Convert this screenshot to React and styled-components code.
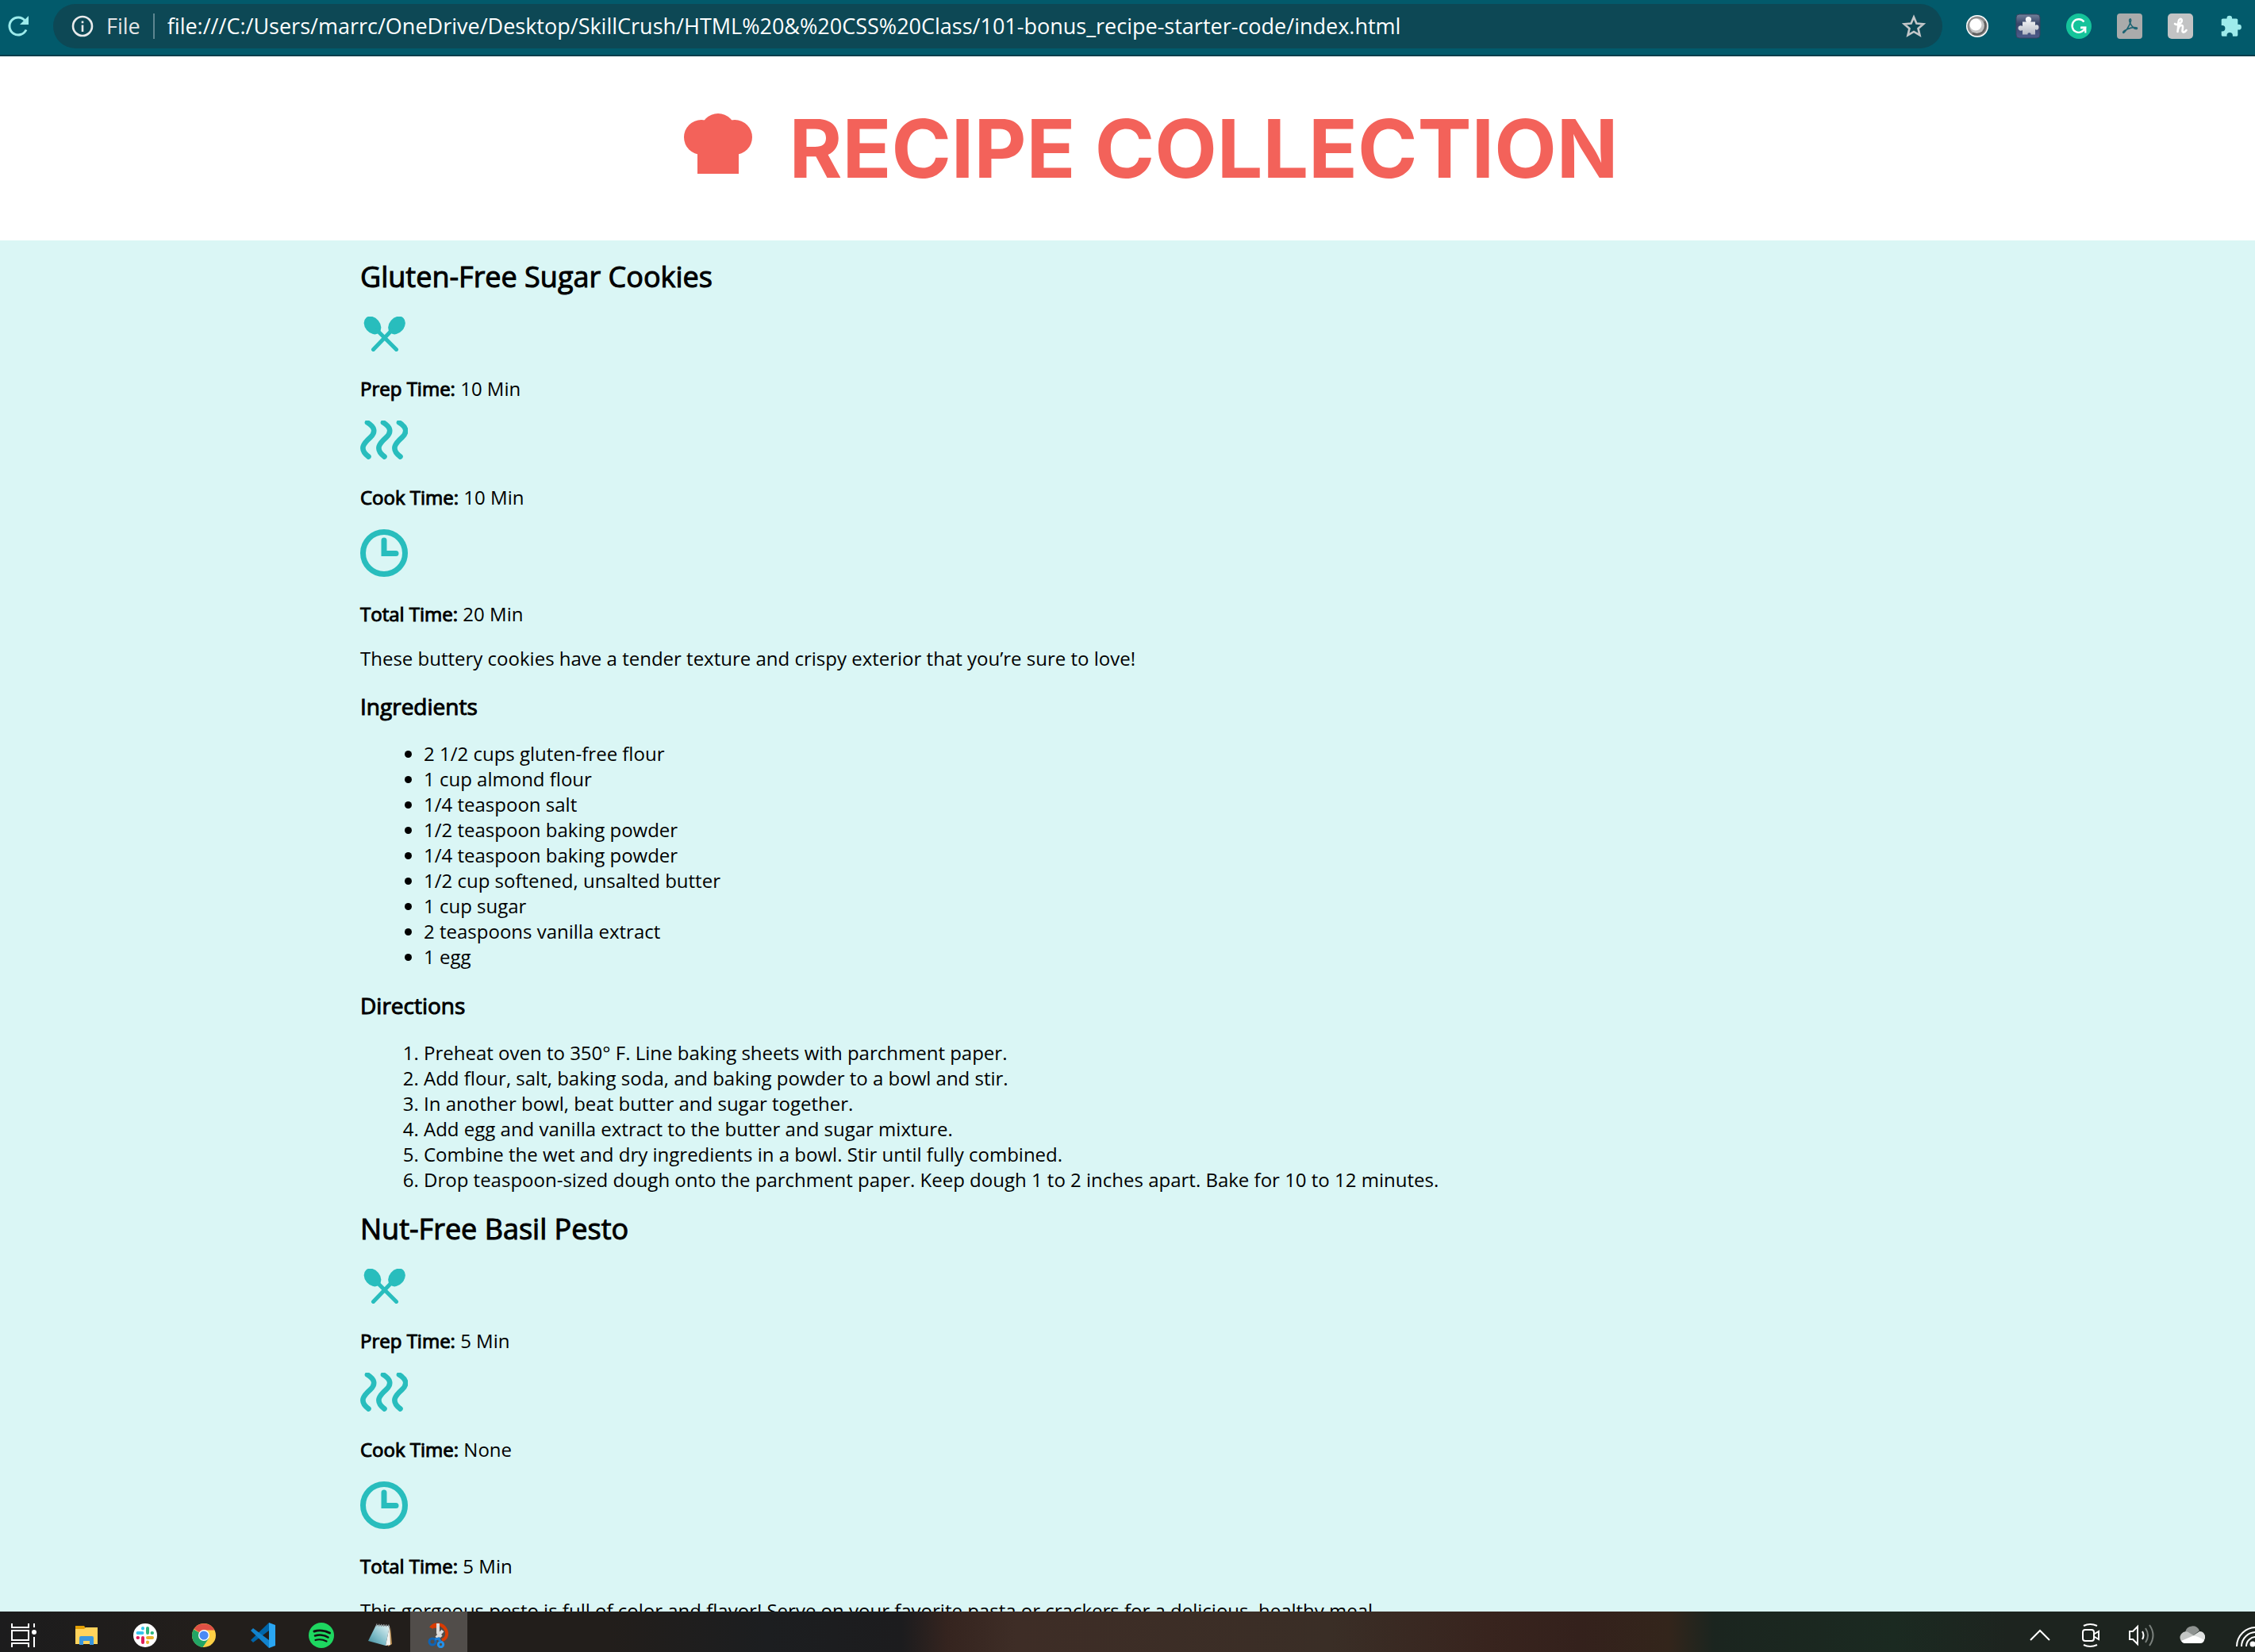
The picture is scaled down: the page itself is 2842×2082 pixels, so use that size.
import React from "react";
import styled, { createGlobalStyle } from "styled-components";

const GlobalStyle = createGlobalStyle`
  * { box-sizing: border-box; }
  body { margin: 0; font-family: "Open Sans", "Noto Sans", sans-serif; }
`;

const Screen = styled.div`
  display: grid;
  grid-template-rows: auto minmax(0, 1fr) auto;
  height: 100vh;
  overflow: hidden;
`;

/* Browser toolbar */
const Toolbar = styled.header`
  display: flex;
  align-items: center;
  height: 71px;
  padding: 0 14px 4px 7px;
  background: #025a6b;
  border-bottom: 2px solid #013e4b;
`;
const IconButton = styled.button`
  display: grid;
  place-items: center;
  width: 32px;
  height: 32px;
  padding: 0;
  border: 0;
  background: none;
`;
const AddressBar = styled.div`
  flex: 1;
  display: flex;
  align-items: center;
  height: 56px;
  margin: 0 28px;
  padding: 0 20px 0 23px;
  border-radius: 28px;
  background: #0d4855;
`;
const Scheme = styled.label`
  padding: 0 16px;
  border-right: 2px solid #5d8690;
  color: #e3e5e6;
  font-size: 27px;
  line-height: 32px;
`;
const Url = styled.input`
  flex: 1;
  min-width: 0;
  padding: 0 16px;
  border: 0;
  background: none;
  color: #fff;
  font: 27px/36px "Open Sans", "Noto Sans", sans-serif;
`;
const Extensions = styled.div`
  display: flex;
  gap: 32px;
`;

/* Recipe page */
const Page = styled.main`
  overflow: hidden;
  background: #daf6f5;
  color: #000;
  font-size: 24px;
  line-height: 32px;
`;
const Banner = styled.div`
  display: flex;
  align-items: center;
  justify-content: center;
  gap: 46px;
  height: 232px;
  padding-left: 60px;
  background: #fff;
`;
const Title = styled.h1`
  margin: 0;
  color: #f3625a;
  font: 700 102px/120px Inter, "Open Sans", sans-serif;
`;
const Recipe = styled.article`
  max-width: 1934px;
  margin: 0 auto;
`;
const Name = styled.h2`
  margin: 22px 0 26px;
  font-size: 36px;
  font-weight: 400;
  line-height: 48px;
  -webkit-text-stroke: 1px #000;
`;
const Picture = styled.div`
  padding-bottom: 7px;
  svg { display: block; }
`;
const Line = styled.p`
  margin: 24px 0;
`;
const Strong = styled.strong`
  font-weight: 400;
  -webkit-text-stroke: 1px #000;
`;
const Subhead = styled.h3`
  margin: 26px 0;
  font-size: 28px;
  font-weight: 400;
  line-height: 36px;
  -webkit-text-stroke: 1px #000;
`;
const Ingredients = styled.ul`
  margin: 0;
  padding: 0 0 1px 80px;
`;
const Directions = styled.ol`
  margin: 0;
  padding: 0 0 0 80px;
`;

/* Desktop taskbar */
const Taskbar = styled.footer`
  display: flex;
  justify-content: space-between;
  height: 51px;
  overflow: hidden;
  background: linear-gradient(90deg, #1c1c1d 0%, #221e1b 9%, #221e1b 27%, #1c1e20 34%, #1c1c1e 40%, #35241f 42%, #3e2d26 45%, #3a2e26 59%, #38241e 66%, #34211c 70%, #33251b 74%, #1b251f 76%, #1b2a21 84%, #1d241f 89%);
`;
const Apps = styled.nav`
  display: flex;
  gap: 2px;
`;
const AppButton = styled.button`
  display: grid;
  place-items: center;
  width: ${(p) => (p.$narrow ? 71 : 72)}px;
  height: 51px;
  padding: 0 ${(p) => (p.$narrow ? 11 : 0)}px 0 0;
  border: 0;
  background: ${(p) => (p.$active ? "#514d4a" : "none")};
  svg { margin-top: 9px; }
`;
const Tray = styled.div`
  display: flex;
  align-items: center;
  gap: 32px;
  margin-right: -1px;
  padding-top: 9px;
`;

const Reload = () => (
  <svg width="28" height="28" viewBox="0 0 28 28" fill="none">
    <path d="M24 18.5A11 11 0 1 1 22.5 7" stroke="#9debeb" strokeWidth="3" />
    <path d="M27 1v11H16z" fill="#9debeb" />
  </svg>
);
const Info = () => (
  <svg width="28" height="28" viewBox="0 0 28 28" fill="none" stroke="#e8eaeb">
    <circle cx="14" cy="14" r="12" strokeWidth="2.6" />
    <path d="M14 12.5V21M14 7.5v2.8" strokeWidth="2.6" />
  </svg>
);
const Star = () => (
  <svg width="30" height="30" viewBox="0 0 30 30" fill="none">
    <path d="M15 3.5l3.4 8 8.7.7-6.6 5.7 2 8.5-7.5-4.5-7.5 4.5 2-8.5-6.6-5.7 8.7-.7z" stroke="#c4c7c9" strokeWidth="2.6" />
  </svg>
);
const Orb = () => (
  <svg width="30" height="30" viewBox="0 0 30 30">
    <circle cx="15" cy="15" r="14" fill="#fff" />
    <circle cx="15" cy="15" r="12.5" fill="#8d8d8d" />
    <path d="M25 8a12.5 12.5 0 0 1-17 17z" fill="#5f5f5f" />
    <circle cx="14.5" cy="14.5" r="9.5" fill="#c4c4c4" />
    <circle cx="13" cy="13" r="7.5" fill="#fff" />
  </svg>
);
const DarkPuzzle = () => (
  <svg width="32" height="32" viewBox="0 0 32 32">
    <defs>
      <linearGradient id="dp" x1="0" y1="0" x2="0" y2="1"><stop offset="0" stopColor="#74829b" /><stop offset=".4" stopColor="#3a4669" /><stop offset="1" stopColor="#4e5c8c" /></linearGradient>
      <linearGradient id="dq" x1="0" y1="0" x2="0" y2="1"><stop offset="0" stopColor="#fff" /><stop offset="1" stopColor="#b6bac6" /></linearGradient>
    </defs>
    <rect x="1" y="1" width="30" height="30" rx="4" fill="url(#dp)" stroke="#37415e" />
    <path d="M14 10.500c-2-2-1.500-6.500 2.500-6.500s4.500 4.500 2.500 6.500h6V15c2-1.500 4.500-.5 4.500 2.500S27 21.500 25 20v6.500h-5.500c.8-3-4.800-3-4 0H9V21c-2 1.500-5.500.5-5.500-2.500S7 14.500 9 16v-5.500z" fill="url(#dq)" />
  </svg>
);
const Grammarly = () => (
  <svg width="32" height="32" viewBox="0 0 32 32" fill="none">
    <circle cx="16" cy="16" r="16" fill="#15c39a" />
    <path d="M22.500 10.500A8.300 8.300 0 1 0 23.800 18H18" stroke="#fff" strokeWidth="2.400" />
    <path d="M24.300 24.500V17.500H18.500" stroke="#fff" strokeWidth="2.200" />
  </svg>
);
const Acrobat = () => (
  <svg width="32" height="32" viewBox="0 0 32 32" fill="none">
    <rect width="32" height="32" rx="4" fill="#aaabab" />
    <path d="M16.500 7c-2.500 1 1 8.500 5 11.500 3 2 5 .5 3.500-.5-3-1.500-11 .5-16 4-2.500 2-1 3.500 1 1C13.500 19.500 18.500 10 17.500 7.500c-.2-.6-.6-.7-1-.5z" stroke="#1c6473" strokeWidth="1.600" />
  </svg>
);
const Honey = () => (
  <svg width="32" height="32" viewBox="0 0 32 32" fill="none">
    <rect width="32" height="32" rx="5" fill="#c2c3c4" />
    <path d="M9 13c3 2.500 9-1 8.800-4.500-.3-3-4-1.500-4.300 2-.3 4-.3 8-1 12.500M13 20c1-3.500 3-5.500 5-5 2.500.8 0 5 .5 7.500.4 1.800 3 1.500 5-1.500" stroke="#fff" strokeWidth="2.600" strokeLinecap="round" />
  </svg>
);
const Puzzle = () => (
  <svg width="32" height="32" viewBox="0 0 32 32"><path transform="translate(1.500 1)" d="M9 5.500V5a3.300 3.300 0 0 1 6.600 0v.5H21c1 0 1.800.8 1.800 1.800v5.500H24a3.400 3.400 0 0 1 0 6.800h-1.200V26c0 1-.8 1.800-1.800 1.800h-4.600v-1a3.700 3.700 0 0 0-7.400 0v1H4c-1 0-1.800-.8-1.800-1.800v-4.600h1a3.700 3.700 0 0 0 0-7.400h-1V7.300c0-1 .8-1.800 1.800-1.800z" fill="#9debeb" /></svg>
);

const ChefHat = () => (
  <svg width="86" height="88" viewBox="0 0 86 88" fill="#f3625a">
    <circle cx="22" cy="30" r="22" />
    <circle cx="64" cy="30" r="22" />
    <circle cx="43" cy="22" r="22" />
    <path d="M17 20h52v56H17z" />
  </svg>
);
const Spoons = () => (
  <svg width="60" height="44" viewBox="0 0 60 44" fill="#28bdbd">
    <ellipse cx="15.500" cy="11" rx="9.500" ry="12.500" transform="rotate(-40 15.500 11)" />
    <ellipse cx="46" cy="11" rx="9.500" ry="12.500" transform="rotate(40 46 11)" />
    <path d="M21 17l24.500 24.500M40 17L16.500 41.500" stroke="#28bdbd" strokeWidth="5" strokeLinecap="round" />
  </svg>
);
const wave = "M9 2.500c9 5.500 11 11.500 4 18.500-9 8-15 15 -2.500 24.500";
const Heat = () => (
  <svg width="60" height="50" viewBox="0 0 60 50" fill="none" stroke="#28bdbd" strokeWidth="6.600" strokeLinecap="round">
    <path d={wave} /><path d={wave} transform="translate(20)" /><path d={wave} transform="translate(40)" />
  </svg>
);
const Clock = () => (
  <svg width="60" height="60" viewBox="0 0 60 60" fill="none" stroke="#28bdbd" strokeWidth="7">
    <circle cx="30" cy="30" r="26.500" />
    <path d="M30 14v16.500h15" strokeLinecap="round" />
  </svg>
);

const TaskView = () => (
  <svg width="32" height="32" viewBox="0 0 32 32" fill="none" stroke="#fff" strokeWidth="2">
    <path d="M1 1v5h21V1M1 31v-5h21v5M1 10h21v12H1zM29 1v5M29 18v13" />
    <circle cx="29" cy="12" r="3" fill="#fff" stroke="none" />
  </svg>
);
const Folder = () => (
  <svg width="32" height="32" viewBox="0 0 32 32">
    <path d="M2 4h11l2 3v2H2z" fill="#e29f05" /><path d="M2 8h11l2-2h15v21H2z" fill="#ffd35c" />
    <path d="M7 28V19q0-2 2-2h14q2 0 2 2v9h-5v-5h-8v5z" fill="#3a96dd" />
  </svg>
);
const Slack = () => (
  <svg width="32" height="32" viewBox="0 0 32 32" fill="none" strokeWidth="4" strokeLinecap="round">
    <circle cx="16" cy="16" r="15" fill="#fff" />
    <path d="M6.500 13h6M13 7v.5" stroke="#36c5f0" /><path d="M19 7v6M25 13h-.5" stroke="#2eb67d" />
    <path d="M19 19h6M19 25v-.5" stroke="#ecb22e" /><path d="M13 19v6M6.500 19h.5" stroke="#e01e5a" />
  </svg>
);
const Chrome = () => (
  <svg width="32" height="32" viewBox="0 0 32 32">
    <circle cx="16" cy="16" r="15" fill="#fdd045" />
    <path d="M16 16L3 8.500A15 15 0 0 0 14.500 31L22 20z" fill="#22a565" />
    <path d="M16 16L3.500 8A15 15 0 0 1 29.500 9.500H16z" fill="#df5045" />
    <circle cx="16" cy="16" r="7" fill="#fff" /><circle cx="16" cy="16" r="5.600" fill="#4a8af4" />
  </svg>
);
const Code = () => (
  <svg width="32" height="32" viewBox="0 0 32 32">
    <path d="M24 0v10L4 25l-3-3z" fill="#0065a9" /><path d="M24 32V22L4 7l-3 3z" fill="#1283cd" />
    <path d="M24 0l8 3v26l-8 3z" fill="#2aa6f2" />
  </svg>
);
const Spotify = () => (
  <svg width="32" height="32" viewBox="0 0 32 32" fill="none" stroke="#111" strokeLinecap="round">
    <circle cx="16" cy="16" r="16" fill="#1ed760" stroke="none" />
    <path d="M7 11c6-2 14-1 19.500 2" strokeWidth="3" /><path d="M8 16.500c5-1.500 12-1 16.500 2" strokeWidth="2.600" /><path d="M8.500 22c5-1.500 10-.5 14 1.500" strokeWidth="2.200" />
  </svg>
);
const Notepad = () => (
  <svg width="32" height="32" viewBox="0 0 32 32">
    <defs><linearGradient id="np" x1="1" y1="0" x2="0" y2="1"><stop offset="0" stopColor="#e9f7f8" /><stop offset=".6" stopColor="#7ab9c6" /><stop offset="1" stopColor="#3d8797" /></linearGradient></defs>
    <path d="M29 5l2 22-5 3z" fill="#b98d50" /><path d="M11 3l17 1-5 25-22-6z" fill="url(#np)" /><path d="M28 4l1 24-6 1z" fill="#f3f3ef" />
    <path d="M11 3l17 1" stroke="#8b9194" strokeWidth="3" strokeDasharray="1.500 1.500" />
  </svg>
);
const Snip = () => (
  <svg width="32" height="32" viewBox="0 0 32 32" fill="none">
    <path d="M7 7C10 1 18 1 23 6c5 6 4 14-3 16" stroke="#d83b01" strokeWidth="4" /><path d="M4 6q5-7 12-5l-2 6z" fill="#d83b01" />
    <path d="M15 1v12l4 5M21 10l-8 9" stroke="#dcdcdc" strokeWidth="4" />
    <circle cx="8" cy="24" r="4" stroke="#0f64b5" strokeWidth="3" /><circle cx="18.500" cy="27.500" r="3.200" stroke="#2490e8" strokeWidth="3" /><path d="M11 21l5-1 2 4" stroke="#1b7dd6" strokeWidth="3" />
  </svg>
);
const Chevron = () => (
  <svg width="32" height="32" viewBox="0 0 32 32" fill="none" stroke="#fff" strokeWidth="2"><path d="M4 22L16 10l12 12" /></svg>
);
const Camera = () => (
  <svg width="32" height="32" viewBox="0 0 32 32" fill="none" stroke="#fff" strokeWidth="2">
    <rect x="6" y="9" width="14" height="14" rx="3" /><path d="M20 14.500l6-3.500v10l-6-3.500M7 4q8-4 17 0M7 28q8 4 17 0" />
  </svg>
);
const Speaker = () => (
  <svg width="32" height="32" viewBox="0 0 32 32" fill="none" stroke="#fff" strokeWidth="2">
    <path d="M1 11h4l6-6v22l-6-6H1zM17 11q3 5 0 10" /><path d="M21 7q6 9 0 18M26 3q9 13 0 26" stroke="#7a807c" />
  </svg>
);
const Cloud = () => (
  <svg width="32" height="32" viewBox="0 0 32 32">
    <path d="M7 12a9.500 9.500 0 0 1 18-2l-9 7z" fill="#8f9391" /><path d="M6 26a7.500 7.500 0 1 1 4-14.500l13 8z" fill="#c3c6c4" />
    <path d="M16 17l9-6a7 7 0 0 1 5 12z" fill="#dfe1e0" /><path d="M2 23l14-6q5-1 15 5-1 4-5 4H6q-2 0-4-3z" fill="#fff" />
  </svg>
);
const Wifi = () => (
  <svg width="32" height="32" viewBox="0 0 32 32" fill="none" stroke="#fff" strokeWidth="2">
    <path d="M8 30A24 24 0 0 1 33 6M14 30A18 18 0 0 1 33 12M20 30A12 12 0 0 1 33 18" /><circle cx="28" cy="27" r="3.500" fill="#fff" stroke="none" />
  </svg>
);

const extensions = [["Lightshot", Orb], ["Extension", DarkPuzzle], ["Grammarly", Grammarly], ["Acrobat", Acrobat], ["Honey", Honey], ["Extensions", Puzzle]];
const apps = [["Task View", TaskView], ["File Explorer", Folder], ["Slack", Slack], ["Chrome", Chrome], ["Visual Studio Code", Code], ["Spotify", Spotify], ["Notepad", Notepad], ["Snipping Tool", Snip]];
const tray = [["Show hidden icons", Chevron], ["Meet Now", Camera], ["Volume", Speaker], ["OneDrive", Cloud], ["Network", Wifi]];

const recipes = [
  {
    name: "Gluten-Free Sugar Cookies",
    times: ["10 Min", "10 Min", "20 Min"],
    about: "These buttery cookies have a tender texture and crispy exterior that you’re sure to love!",
    ingredients: ["2 1/2 cups gluten-free flour", "1 cup almond flour", "1/4 teaspoon salt", "1/2 teaspoon baking powder", "1/4 teaspoon baking powder", "1/2 cup softened, unsalted butter", "1 cup sugar", "2 teaspoons vanilla extract", "1 egg"],
    directions: ["Preheat oven to 350° F. Line baking sheets with parchment paper.", "Add flour, salt, baking soda, and baking powder to a bowl and stir.", "In another bowl, beat butter and sugar together.", "Add egg and vanilla extract to the butter and sugar mixture.", "Combine the wet and dry ingredients in a bowl. Stir until fully combined.", "Drop teaspoon-sized dough onto the parchment paper. Keep dough 1 to 2 inches apart. Bake for 10 to 12 minutes."],
  },
  {
    name: "Nut-Free Basil Pesto",
    times: ["5 Min", "None", "5 Min"],
    about: "This gorgeous pesto is full of color and flavor! Serve on your favorite pasta or crackers for a delicious, healthy meal.",
  },
];
const timeKinds = [["Prep Time:", Spoons], ["Cook Time:", Heat], ["Total Time:", Clock]];

function RecipeCard({ recipe }) {
  return (
    <Recipe>
      <Name>{recipe.name}</Name>
      {timeKinds.map(([label, Icon], i) => (
        <React.Fragment key={label}>
          <Picture><Icon /></Picture>
          <Line><Strong>{label}</Strong> {recipe.times[i]}</Line>
        </React.Fragment>
      ))}
      <Line>{recipe.about}</Line>
      {recipe.ingredients && (
        <>
          <Subhead>Ingredients</Subhead>
          <Ingredients>{recipe.ingredients.map((t) => <li key={t}>{t}</li>)}</Ingredients>
          <Subhead>Directions</Subhead>
          <Directions>{recipe.directions.map((t) => <li key={t}>{t}</li>)}</Directions>
        </>
      )}
    </Recipe>
  );
}

export default function App() {
  return (
    <Screen>
      <GlobalStyle />
      <Toolbar>
        <IconButton aria-label="Reload"><Reload /></IconButton>
        <AddressBar>
          <Info />
          <Scheme htmlFor="url">File</Scheme>
          <Url id="url" defaultValue="file:///C:/Users/marrc/OneDrive/Desktop/SkillCrush/HTML%20&%20CSS%20Class/101-bonus_recipe-starter-code/index.html" />
          <IconButton aria-label="Bookmark this page"><Star /></IconButton>
        </AddressBar>
        <Extensions>
          {extensions.map(([label, Icon]) => <IconButton key={label} aria-label={label}><Icon /></IconButton>)}
        </Extensions>
      </Toolbar>
      <Page>
        <Banner><ChefHat /><Title>RECIPE COLLECTION</Title></Banner>
        {recipes.map((r) => <RecipeCard key={r.name} recipe={r} />)}
      </Page>
      <Taskbar>
        <Apps>
          {apps.map(([label, Icon], i) => (
            <AppButton key={label} aria-label={label} $narrow={i === 0} $active={label === "Snipping Tool"}><Icon /></AppButton>
          ))}
        </Apps>
        <Tray>
          {tray.map(([label, Icon]) => <IconButton key={label} aria-label={label}><Icon /></IconButton>)}
        </Tray>
      </Taskbar>
    </Screen>
  );
}
